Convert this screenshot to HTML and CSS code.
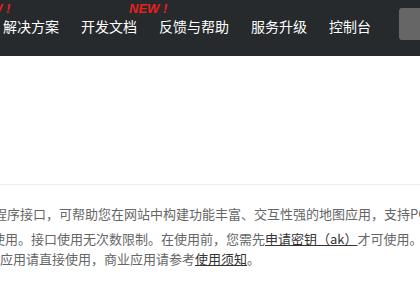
FILE: index.html
```html
<!DOCTYPE html>
<html lang="zh">
<head>
<meta charset="utf-8">
<link rel="stylesheet" href="styles.css">
</head>
<body>
<header class="topbar">
  <nav class="nav">
    <a class="nav-item">解决方案<span class="badge badge-prev">NEW !</span></a>
    <a class="nav-item">开发文档<span class="badge">NEW !</span></a>
    <a class="nav-item">反馈与帮助</a>
    <a class="nav-item">服务升级</a>
    <a class="nav-item">控制台</a>
  </nav>
  <div class="search-box"></div>
</header>
<main class="page">
  <div class="banner"></div>
  <section class="intro">
    <p class="para para-one">应用程序接口，可帮助您在网站中构建功能丰富、交互性强的地图应用，支持PC端和移动端</p>
    <p class="para para-two"><span class="line line-a">放使用。接口使用无次数限制。在使用前，您需先<a class="link">申请密钥（ak）</a>才可使用。</span><span class="line line-b">，非商业应用请直接使用，商业应用请参考<a class="link">使用须知</a>。</span></p>
  </section>
</main>
</body>
</html>
```
FILE: styles.css
```css
html, body {
  margin: 0;
  padding: 0;
  background: #ffffff;
  overflow: hidden;
}
body {
  font-family: "Noto Sans CJK SC", "Noto Sans", sans-serif;
}
.topbar {
  height: 56px;
  background: #272a2c;
  display: flex;
  align-items: center;
  position: relative;
}
.nav {
  display: flex;
  gap: 22px;
  padding-left: 3px;
  margin-top: -4px;
}
.nav-item {
  position: relative;
  color: #ffffff;
  font-size: 14px;
  line-height: 20px;
  white-space: nowrap;
}
.badge {
  position: absolute;
  left: 48px;
  top: -14px;
  color: #e8201e;
  font-family: "Liberation Sans", Arial, sans-serif;
  font-style: italic;
  font-weight: bold;
  font-size: 13px;
  line-height: 13px;
  white-space: nowrap;
}
.badge-prev {
  left: -31px;
}
.search-box {
  position: absolute;
  left: 399px;
  top: 8px;
  width: 60px;
  height: 32px;
  background: #666666;
  border-radius: 3px;
}
.page {
  display: flex;
  flex-direction: column;
}
.banner {
  height: 128px;
  border-bottom: 1px solid #eeeeee;
}
.intro {
  padding-top: 19px;
  margin-left: -18px;
  font-size: 13px;
  color: #666666;
  white-space: nowrap;
}
.para {
  margin: 0;
  line-height: 20px;
}
.para-one {
  margin-left: -14px;
}
.para-two {
  margin-top: 5px;
}
.line {
  display: block;
}
.line-a {
  margin-left: -3px;
}
.line-b {
  margin-left: -34px;
}
.link {
  color: #333333;
  text-decoration: underline;
}
```
